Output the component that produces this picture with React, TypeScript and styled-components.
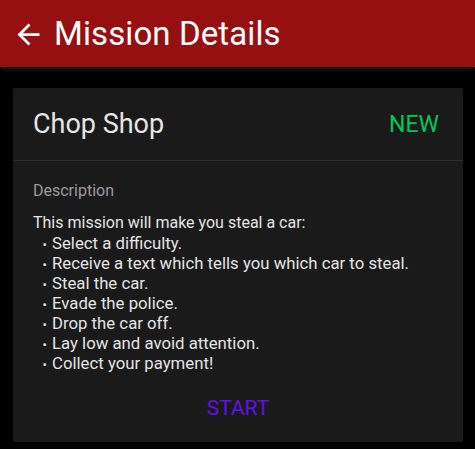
import React from "react";
import styled, { createGlobalStyle } from "styled-components";

const GlobalStyle = createGlobalStyle`
  html, body {
    margin: 0;
    padding: 0;
    background: #000;
  }
  body {
    font-family: Roboto, "Noto Sans", sans-serif;
    -webkit-font-smoothing: antialiased;
  }
`;

const Page = styled.div`
  width: 475px;
  min-height: 449px;
  background: #000;
`;

const AppBar = styled.header`
  display: flex;
  align-items: center;
  height: 67px;
  padding-left: 12px;
  background: #961012;
  color: #fff;
  box-shadow: 0 2px 5px rgba(40, 40, 40, 0.9);
  position: relative;
  z-index: 1;

  h1 {
    margin: 0 0 0 9px;
    font-size: 33px;
    font-weight: 400;
    line-height: 40px;
    letter-spacing: 0.1px;
  }
`;

const BackIcon = styled.svg`
  width: 33px;
  height: 33px;
  fill: #fff;
  margin-top: 1px;
`;

const Body = styled.main`
  padding: 21px 12px 9px 13px;
`;

const Card = styled.section`
  background: #1a1a1a;
  border-radius: 2px;
`;

const CardHeader = styled.div`
  display: flex;
  justify-content: space-between;
  align-items: center;
  height: 72px;
  padding: 0 24px 0 20px;
  border-bottom: 1px solid #2e2e2e;
`;

const Title = styled.h2`
  margin: 0;
  font-size: 27px;
  font-weight: 400;
  color: #e6e6e6;
`;

const Badge = styled.span`
  font-size: 23px;
  font-weight: 400;
  color: #00c853;
`;

const CardContent = styled.div`
  padding: 20px 20px 0;
`;

const Label = styled.div`
  font-size: 16px;
  line-height: 20px;
  color: #9a9a9a;
  margin-bottom: 12px;
`;

const Text = styled.p`
  margin: 0;
  font-size: 16px;
  line-height: 20px;
  color: #e4e4e4;
`;

const Steps = styled.ul`
  list-style: none;
  margin: 0;
  padding: 0 0 0 9.5px;
  font-size: 16.75px;
  line-height: 20px;
  color: #e4e4e4;

  li::before {
    content: "•";
    display: inline-block;
    width: 9.5px;
    font-size: 13px;
    line-height: 0;
  }
`;

const Actions = styled.div`
  display: flex;
  justify-content: center;
  padding: 23px 0 22px;
`;

const TextButton = styled.button`
  border: none;
  background: transparent;
  padding: 0;
  font-family: Roboto, sans-serif;
  font-size: 21px;
  line-height: 24px;
  font-weight: 400;
  color: #6212e6;
  cursor: pointer;
`;

const steps = [
  "Select a difficulty.",
  "Receive a text which tells you which car to steal.",
  "Steal the car.",
  "Evade the police.",
  "Drop the car off.",
  "Lay low and avoid attention.",
  "Collect your payment!",
];

export default function App() {
  return (
    <Page>
      <GlobalStyle />
      <AppBar>
        <BackIcon viewBox="0 0 24 24">
          <path d="M20 11H7.83l5.59-5.59L12 4l-8 8 8 8 1.41-1.41L7.83 13H20v-2z" />
        </BackIcon>
        <h1>Mission Details</h1>
      </AppBar>
      <Body>
        <Card>
          <CardHeader>
            <Title>Chop Shop</Title>
            <Badge>NEW</Badge>
          </CardHeader>
          <CardContent>
            <Label>Description</Label>
            <Text>This mission will make you steal a car:</Text>
            <Steps>
              {steps.map(step => (
                <li key={step}>{step}</li>
              ))}
            </Steps>
          </CardContent>
          <Actions>
            <TextButton type="button">START</TextButton>
          </Actions>
        </Card>
      </Body>
    </Page>
  );
}
